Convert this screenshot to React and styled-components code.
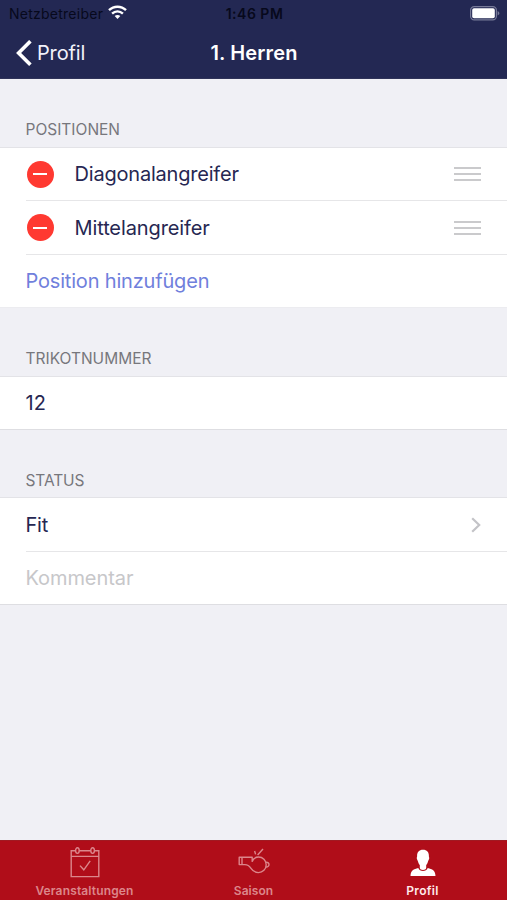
import React from "react";
import styled, { createGlobalStyle } from "styled-components";

const Global = createGlobalStyle`
  *, *::before, *::after { box-sizing: border-box; }
  body { margin: 0; background: #f0f0f5; font-family: Inter, "Liberation Sans", sans-serif; }
`;

const Screen = styled.div`
  display: flex;
  flex-direction: column;
  width: 100%;
  height: 900px;
  overflow: hidden;
  background: #f0f0f5;
`;

const Header = styled.header`
  height: 79px;
  flex: none;
  background: #232853;
  border-bottom: 1px solid #2f3359;
`;

const StatusBar = styled.div`
  display: grid;
  grid-template-columns: 1fr auto 1fr;
  align-items: center;
  height: 27px;
  padding: 0 7px 0 9px;
  color: #07091c;
  font-size: 14px;
  line-height: 26px;
`;

const Carrier = styled.div`
  display: flex;
  align-items: center;
  gap: 5px;
  letter-spacing: 0.25px;
  & > svg { margin-bottom: 2px; }
`;

const CarrierName = styled.span`
  padding-top: 1px;
`;

const Clock = styled.div`
  padding-top: 1px;
  font-weight: 600;
  letter-spacing: 0.5px;
`;

const BatterySlot = styled.div`
  display: flex;
  justify-content: flex-end;
`;

const NavBar = styled.div`
  display: grid;
  grid-template-columns: 1fr auto 1fr;
  align-items: center;
  height: 51px;
  padding: 0 15px;
  color: #fff;
  font-size: 20px;
  line-height: 51px;
`;

const Back = styled.div`
  display: flex;
  align-items: center;
  gap: 5px;
  color: #f1f2fb;
  letter-spacing: -0.15px;
`;

const BackLabel = styled.span`
  padding-top: 1px;
`;

const Title = styled.div`
  padding: 1px 0 0 1px;
  font-weight: 600;
  letter-spacing: 0.15px;
`;

const Content = styled.main`
  flex: 1;
`;

const SectionTitle = styled.h2`
  display: flex;
  align-items: flex-end;
  height: ${(p) => p.$height}px;
  margin: 0;
  padding: 0 25.5px ${(p) => p.$bottom || 7}px;
  color: #77777c;
  font-size: 15.5px;
  font-weight: 400;
  line-height: 20px;
  letter-spacing: ${(p) => p.$spacing || 0}px;
`;

const List = styled.div`
  background: #fff;
  border-top: 1px solid #e3e3e7;
  border-bottom: 1px solid ${(p) => p.$edge || "#dedee2"};
`;

const Row = styled.div`
  display: flex;
  align-items: center;
  height: ${(p) => p.$height || 53}px;
  margin-left: 25.5px;
  padding-right: 26.5px;
  & + & { border-top: 1px solid #e6e6e8; }
`;

const Label = styled.span`
  flex: 1;
  color: ${(p) => p.$color || "#262752"};
  font-size: 20px;
  line-height: 26px;
  letter-spacing: ${(p) => p.$spacing || 0}px;
`;

const Remove = styled.span`
  display: flex;
  align-items: center;
  justify-content: center;
  width: 27px;
  height: 27px;
  margin: 0 21px 0 1px;
  border-radius: 50%;
  background: #ff3931;
  &::before {
    content: "";
    width: 14px;
    height: 2px;
    background: #fff;
  }
`;

const Grip = styled.span`
  display: flex;
  flex-direction: column;
  gap: 4px;
  width: 27px;
  & > i { height: 2px; background: #cacacc; }
`;

const TabBar = styled.nav`
  display: grid;
  grid-template-columns: repeat(3, 1fr);
  flex: none;
  height: 60px;
  background: #b00d19;
  border-top: 1px solid #a01a22;
`;

const Tab = styled.div`
  display: flex;
  flex-direction: column;
  align-items: center;
  padding-top: 5px;
  color: ${(p) => (p.$active ? "#ffe9e9" : "#dc868b")};
  font-size: 12px;
  font-weight: 600;
  line-height: 16px;
  letter-spacing: ${(p) => p.$spacing || 0}px;
  & > svg { display: block; margin-bottom: 5px; }
`;

const WifiIcon = () => (
  <svg width="19" height="15" viewBox="0 0 19 15" fill="none" stroke="#fff" strokeWidth="2.4">
    <path d="M1 5.2C5.8.5 13.2.5 18 5.2" />
    <path d="M4.1 8.6c3.1-3 7.7-3 10.8 0" />
    <path d="M6.7 11.1c1.6-1.5 4-1.5 5.6 0L9.5 14z" fill="#fff" stroke="none" />
  </svg>
);

const BatteryIcon = () => (
  <svg width="30" height="15" viewBox="0 0 30 15" fill="none">
    <rect x="0.6" y="0.6" width="25.8" height="13.3" rx="3.6" stroke="#777a98" strokeWidth="1.2" />
    <rect x="2.2" y="2.2" width="22.6" height="10.1" rx="1.8" fill="#fff" />
    <path d="M27.6 5v4.5c1-.4 1.8-1.3 1.8-2.2s-.8-1.8-1.8-2.3z" fill="#777a98" />
  </svg>
);

const BackIcon = () => (
  <svg width="17" height="27" viewBox="0 0 17 27" fill="none" stroke="#fff" strokeWidth="3.6">
    <path d="M15.4 1.2 3.6 13l11.8 11.8" />
  </svg>
);

const DisclosureIcon = () => (
  <svg width="10" height="16" viewBox="0 0 10 16" fill="none" stroke="#c3c3c7" strokeWidth="2.2">
    <path d="M1.2 1.2 8.2 8l-7 6.8" />
  </svg>
);

const CalendarIcon = () => (
  <svg width="30" height="32" viewBox="0 0 30 32" fill="none" stroke="#dc868b" strokeWidth="1.4">
    <path d="M5.5 4.8H1.2v25.8h27.6V4.8h-4.2M9.2 4.8h11.6M1.2 10.4h27.6" />
    <ellipse cx="7.4" cy="4.6" rx="1.8" ry="2.8" />
    <ellipse cx="22.6" cy="4.6" rx="1.8" ry="2.8" />
    <path d="m10 19.6 3.8 4.2 6.4-9" />
  </svg>
);

const WhistleIcon = () => (
  <svg width="32" height="32" viewBox="0 0 32 32" fill="none" stroke="#dc868b" strokeWidth="1.4" strokeLinejoin="round">
    <path d="M1.2 11.2h13v4.2c1.1-2.6 3.4-4.4 6.3-4.4 4.3 0 7.7 3.4 7.7 7.8s-3.5 7.8-7.7 7.8c-3.6 0-5.8-1.6-7.5-4.2-1.5-2.3-2.9-3.8-6.1-3.8H1.2z" />
    <path d="M4 11.2v7.4M28 16.2c4-.2 4 4.9 0 4.8M16.6 5l1 3.4M25 3l-5.4 6" />
  </svg>
);

const PersonIcon = () => (
  <svg width="26" height="32" viewBox="0 0 26 32" fill="#fff">
    <path d="M13 3.8c4 0 6 2.4 5.9 6.2-.1 1 .5 1.3.3 2.6-.2 1.3-.9 1.9-1.2 2.8-.5 1.8-1.1 2.8-1.8 3.5v2.9c0 2.9-6.4 2.9-6.4 0v-2.9c-.7-.7-1.3-1.7-1.8-3.5-.3-.9-1-1.5-1.2-2.8-.2-1.3.4-1.6.3-2.6-.1-3.8 1.9-6.2 5.9-6.2z" />
    <path d="M8.3 22.1c1 4 8.4 4 9.4 0 4.6 1.4 7.6 2 7.8 8H.5c.2-6 3.2-6.6 7.8-8z" />
  </svg>
);

const PositionRow = ({ name, spacing, height }) => (
  <Row $height={height}>
    <Remove />
    <Label $spacing={spacing}>{name}</Label>
    <Grip><i /><i /><i /></Grip>
  </Row>
);

export default function App() {
  return (
    <Screen>
      <Global />
      <Header>
        <StatusBar>
          <Carrier><CarrierName>Netzbetreiber</CarrierName><WifiIcon /></Carrier>
          <Clock>1:46 PM</Clock>
          <BatterySlot><BatteryIcon /></BatterySlot>
        </StatusBar>
        <NavBar>
          <Back><BackIcon /><BackLabel>Profil</BackLabel></Back>
          <Title>1. Herren</Title>
        </NavBar>
      </Header>
      <Content>
        <SectionTitle $height={68}>POSITIONEN</SectionTitle>
        <List $edge="#ececf0">
          <PositionRow name="Diagonalangreifer" height={52} spacing={-0.2} />
          <PositionRow name="Mittelangreifer" height={54} spacing={-0.11} />
          <Row><Label $color="#7080dc" $spacing={-0.18}>Position hinzufügen</Label></Row>
        </List>
        <SectionTitle $height={68}>TRIKOTNUMMER</SectionTitle>
        <List>
          <Row $height={52}><Label>12</Label></Row>
        </List>
        <SectionTitle $height={67} $bottom={6} $spacing={-0.1}>STATUS</SectionTitle>
        <List>
          <Row><Label $spacing={-0.2}>Fit</Label><DisclosureIcon /></Row>
          <Row><Label $color="#c7c7ca" $spacing={-0.08}>Kommentar</Label></Row>
        </List>
      </Content>
      <TabBar>
        <Tab $spacing={0.15}><CalendarIcon />Veranstaltungen</Tab>
        <Tab $spacing={0.05}><WhistleIcon />Saison</Tab>
        <Tab $active $spacing={0.3}><PersonIcon />Profil</Tab>
      </TabBar>
    </Screen>
  );
}
